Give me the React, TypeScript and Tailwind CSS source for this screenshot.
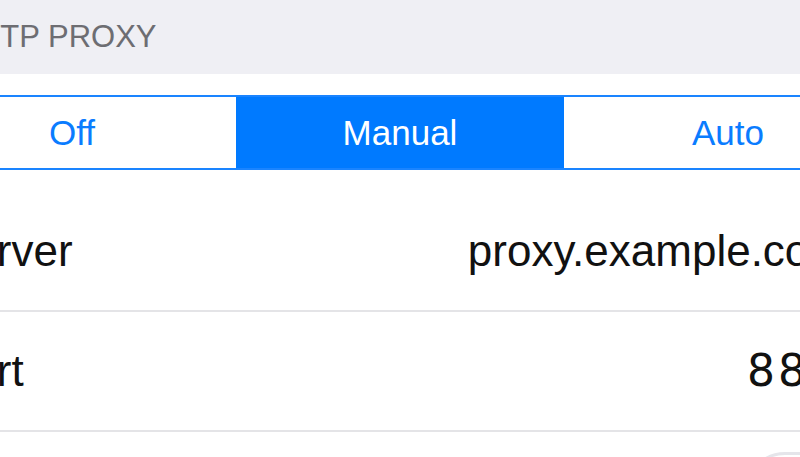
import React from "react";

const segments = ["Off", "Manual", "Auto"];

const App: React.FC = () => {
  const selected = "Manual";

  return (
    <div className="w-[800px] h-[457px] overflow-hidden bg-white font-['Liberation_Sans',Arial,sans-serif]">
      {/* Section header */}
      <div className="h-[74px] bg-[#efeff4] pt-[21px]">
        <p className="-ml-[41px] text-[31px] leading-none text-[#6d6d72] whitespace-nowrap">
          HTTP PROXY
        </p>
      </div>

      {/* Segmented control cell */}
      <div className="py-[21px]">
        <div className="-ml-[94px] w-[988px] h-[75px] border-2 border-[#1a84ff] grid grid-cols-3">
          {segments.map((s) => (
            <div
              key={s}
              className={`flex items-center justify-center text-[35px] leading-none ${
                s === selected ? "bg-[#007aff] text-white" : "bg-white text-[#0a7cff]"
              }`}
            >
              {s}
            </div>
          ))}
        </div>
      </div>

      {/* Server */}
      <div className="h-[121px] border-b-2 border-[#e4e4e7]">
        <div className="-ml-[57px] w-[903px] h-full flex items-center justify-between text-[44px] leading-none text-[#111] whitespace-nowrap">
          <span>Server</span>
          <span>proxy.example.com</span>
        </div>
      </div>

      {/* Port */}
      <div className="h-[120px] border-b-2 border-[#e4e4e7]">
        <div className="-ml-[57px] w-[903px] h-full flex items-center justify-between text-[44px] leading-none text-[#111] whitespace-nowrap">
          <span>Port</span>
          <span className="font-['DejaVu_Sans',sans-serif] tracking-[3px] -mr-[25px]">8888</span>
        </div>
      </div>

      {/* Authentication toggle (mostly off screen) */}
      <div className="h-[120px] flex items-center">
        <div className="ml-[745px] shrink-0 w-[132px] h-[80px] rounded-full border-[3px] border-[#e5e5ea] bg-white" />
      </div>
    </div>
  );
};

export default App;
